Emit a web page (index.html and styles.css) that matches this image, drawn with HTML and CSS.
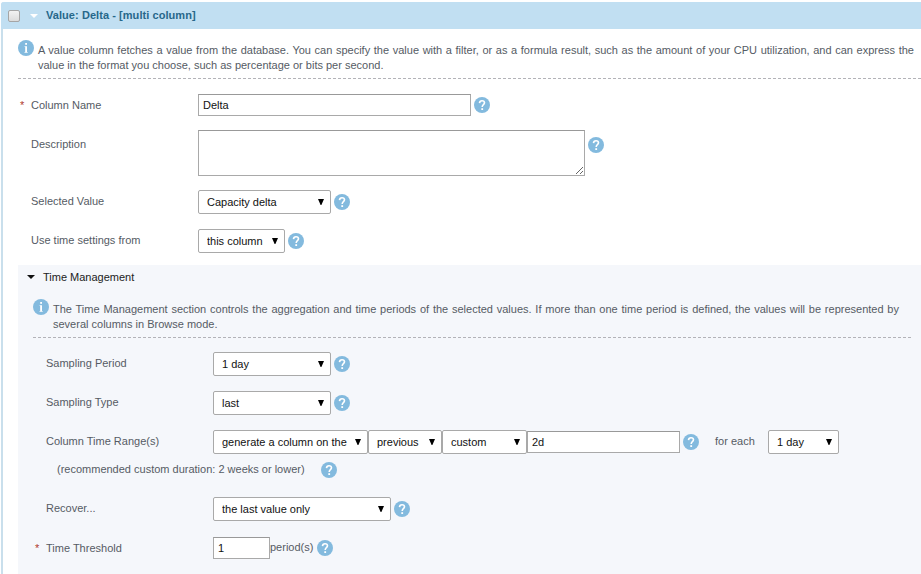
FILE: index.html
```
<!DOCTYPE html>
<html lang="en">
<head>
  <meta charset="UTF-8">
  <meta name="viewport" content="width=device-width, initial-scale=1.0">
  <title>Value: Delta - [multi column]</title>
  <link rel="stylesheet" href="styles.css">
</head>
<body>
  <!-- Shared icons -->
  <svg class="icon-defs" width="0" height="0">
    <symbol id="help" viewBox="0 0 16 16">
      <circle cx="8" cy="8" r="8" fill="#83bade"/>
      <path d="M5.5 6.1C5.6 4.4 6.6 3.7 8 3.7c1.6 0 2.5.8 2.5 2.1 0 1.8-2.3 2-2.3 4.1" fill="none" stroke="#fff" stroke-width="1.6"/>
      <rect x="7.3" y="11.2" width="1.8" height="1.8" fill="#fff"/>
    </symbol>
    <symbol id="info" viewBox="0 0 16 16">
      <circle cx="8" cy="8" r="8" fill="#83bade"/>
      <rect x="7.2" y="3" width="1.8" height="1.8" fill="#fff"/>
      <path d="M6.6 6.2H9v5.7h.7v.8H6.5v-.8h.7V7h-.6z" fill="#fff"/>
    </symbol>
    <symbol id="arrow" viewBox="0 0 6 6">
      <path d="M0 0h6L3.4 6h-.8z" fill="#000"/>
    </symbol>
  </svg>

  <div class="panel">
    <div class="panel-header">
      <input type="checkbox" class="check">
      <svg class="toggle" width="8" height="4" viewBox="0 0 8 4"><path d="M0 0h8L4 4z" fill="#fff"/></svg>
      <h1>Value: Delta - [multi column]</h1>
    </div>

    <div class="panel-body">
      <div class="info">
        <svg class="icon"><use href="#info"/></svg>
        <p>A value column fetches a value from the database. You can specify the value with a filter, or as a formula result, such as the amount of your CPU utilization, and can express the value in the format you choose, such as percentage or bits per second.</p>
      </div>

      <!-- Column settings -->
      <div class="row row-name">
        <label class="required" for="name">Column Name</label>
        <input type="text" id="name" class="w-name" value="Delta">
        <svg class="icon"><use href="#help"/></svg>
      </div>
      <div class="row row-description">
        <label for="description">Description</label>
        <textarea id="description"></textarea>
        <svg class="icon"><use href="#help"/></svg>
      </div>
      <div class="row">
        <label for="value">Selected Value</label>
        <span class="select w-value"><select id="value"><option>Capacity delta</option></select><svg><use href="#arrow"/></svg></span>
        <svg class="icon"><use href="#help"/></svg>
      </div>
      <div class="row">
        <label for="settings">Use time settings from</label>
        <span class="select w-settings"><select id="settings"><option>this column</option></select><svg><use href="#arrow"/></svg></span>
        <svg class="icon"><use href="#help"/></svg>
      </div>

      <!-- Time Management -->
      <div class="section">
        <div class="section-header">
          <svg class="toggle" width="8" height="4" viewBox="0 0 8 4"><path d="M0 0h8L4 4z" fill="#111"/></svg>
          <h2>Time Management</h2>
        </div>
        <div class="info">
          <svg class="icon"><use href="#info"/></svg>
          <p>The Time Management section controls the aggregation and time periods of the selected values. If more than one time period is defined, the values will be represented by several columns in Browse mode.</p>
        </div>
        <div class="row">
          <label for="period">Sampling Period</label>
          <span class="select w-sampling"><select id="period"><option>1 day</option></select><svg><use href="#arrow"/></svg></span>
          <svg class="icon"><use href="#help"/></svg>
        </div>
        <div class="row">
          <label for="type">Sampling Type</label>
          <span class="select w-sampling"><select id="type"><option>last</option></select><svg><use href="#arrow"/></svg></span>
          <svg class="icon"><use href="#help"/></svg>
        </div>
        <div class="row row-range">
          <label for="range">Column Time Range(s)</label>
          <span class="select w-range"><select id="range"><option>generate a column on the</option></select><svg><use href="#arrow"/></svg></span>
          <span class="select w-previous"><select><option>previous</option></select><svg><use href="#arrow"/></svg></span>
          <span class="select w-custom"><select><option>custom</option></select><svg><use href="#arrow"/></svg></span>
          <input type="text" class="w-duration" value="2d">
          <svg class="icon"><use href="#help"/></svg>
          <span class="each">for each</span>
          <span class="select w-each"><select><option>1 day</option></select><svg><use href="#arrow"/></svg></span>
        </div>
        <div class="note">
          <span>(recommended custom duration: 2 weeks or lower)</span>
          <svg class="icon"><use href="#help"/></svg>
        </div>
        <div class="row">
          <label for="recover">Recover...</label>
          <span class="select w-recover"><select id="recover"><option>the last value only</option></select><svg><use href="#arrow"/></svg></span>
          <svg class="icon"><use href="#help"/></svg>
        </div>
        <div class="row row-threshold">
          <label class="required" for="threshold">Time Threshold</label>
          <input type="text" id="threshold" class="w-threshold" value="1">
          <span class="unit">period(s)</span>
          <svg class="icon"><use href="#help"/></svg>
        </div>
      </div>
    </div>
  </div>
</body>
</html>
```
FILE: styles.css
```
* {
  box-sizing: border-box;
}
body {
  margin: 0;
  padding: 2px 0 0 1px;
  height: 574px;
  overflow: hidden;
  background: #fff;
  color: #555b64;
  font: 11px/15px "Liberation Sans", Arial, sans-serif;
}
h1, h2, p {
  margin: 0;
  font-size: 11px;
}
.icon-defs {
  position: absolute;
}
.panel {
  height: 572px;
  border-left: 2px solid #c9dfec;
  border-top-left-radius: 3px;
}
.panel-header {
  display: flex;
  align-items: center;
  height: 27px;
  margin-left: -2px;
  padding-left: 7px;
  border-top-left-radius: 3px;
  background: #c1dff2;
}
.panel-header h1 {
  margin-left: 8px;
  color: #27678a;
  letter-spacing: 0.06px;
}
.check {
  appearance: none;
  width: 12px;
  height: 12px;
  margin: 0 10px 0 0;
  border: 1px solid #a5a5a5;
  border-radius: 2px;
  background: linear-gradient(#f2f2f2, #dcdcdc);
}
.toggle {
  flex: none;
}
.panel-body {
  padding: 11px 0 0 15px;
}
.icon {
  flex: none;
  width: 16px;
  height: 16px;
}
.info {
  display: flex;
  height: 39px;
  border-bottom: 1px dashed #b3b3b8;
}
.info p {
  margin: 3px 7px 0 4px;
  text-align: justify;
}

/* Form rows */
.row {
  display: flex;
  align-items: flex-start;
  height: 39px;
  padding-left: 13px;
}
.row label {
  position: relative;
  flex: none;
  width: 167px;
  padding-top: 4px;
}
.row .icon {
  margin: 4px 0 0 3px;
}
.required::before {
  content: "*";
  position: absolute;
  left: -11px;
  color: #b03a2e;
}
.row-name {
  height: 36px;
  margin-top: 15px;
}
.row-name .icon, .row-threshold .icon {
  margin-top: 3px;
}
.row-description {
  height: 60px;
}
.row-description label {
  padding-top: 7px;
}
.row-description .icon {
  margin-top: 7px;
}
input[type="text"], textarea, select {
  margin: 0;
  border: 1px solid #a9a9a9;
  background: #fff;
  color: #111;
  font: inherit;
}
input[type="text"] {
  flex: none;
  height: 22px;
  padding: 0 4px;
  border-top-color: #999;
}
textarea {
  width: 387px;
  height: 46px;
  border-top-color: #999;
}
.select {
  position: relative;
  flex: none;
  height: 24px;
}
.select select {
  appearance: none;
  width: 100%;
  height: 24px;
  padding: 0 0 0 8px;
  border-radius: 2px;
}
.select svg {
  position: absolute;
  top: 9px;
  right: 7px;
  width: 6px;
  height: 6px;
}
.w-name { width: 273px; }
.w-value { width: 133px; }
.w-settings { width: 87px; }
.w-sampling { width: 118px; }
.w-range { width: 155px; }
.w-previous { width: 74px; }
.w-custom { width: 85px; }
.w-duration { width: 153px; }
.w-each { width: 71px; }
.w-recover { width: 178px; }
.w-threshold { width: 57px; }

/* Time Management section */
.section {
  height: 309px;
  margin-top: -3px;
  padding-left: 15px;
  background: #f5f7fb;
}
.section-header {
  display: flex;
  align-items: center;
  height: 24px;
  margin-left: -6px;
}
.section-header h2 {
  margin-left: 8px;
  color: #222;
  font-weight: normal;
}
.section .info {
  margin: 10px 10px 14px 0;
}
.section .info p {
  margin-right: 12px;
}
.row-range {
  height: 32px;
}
.row-range .w-duration {
  margin-top: 1px;
}
.each {
  width: 53px;
  margin: 4px 0 0 16px;
}
.note {
  display: flex;
  height: 35px;
  padding-left: 24px;
}
.note span {
  width: 264px;
}
.row-threshold {
  padding-top: 1px;
}
.unit {
  width: 44px;
  margin-top: 3px;
}
```
